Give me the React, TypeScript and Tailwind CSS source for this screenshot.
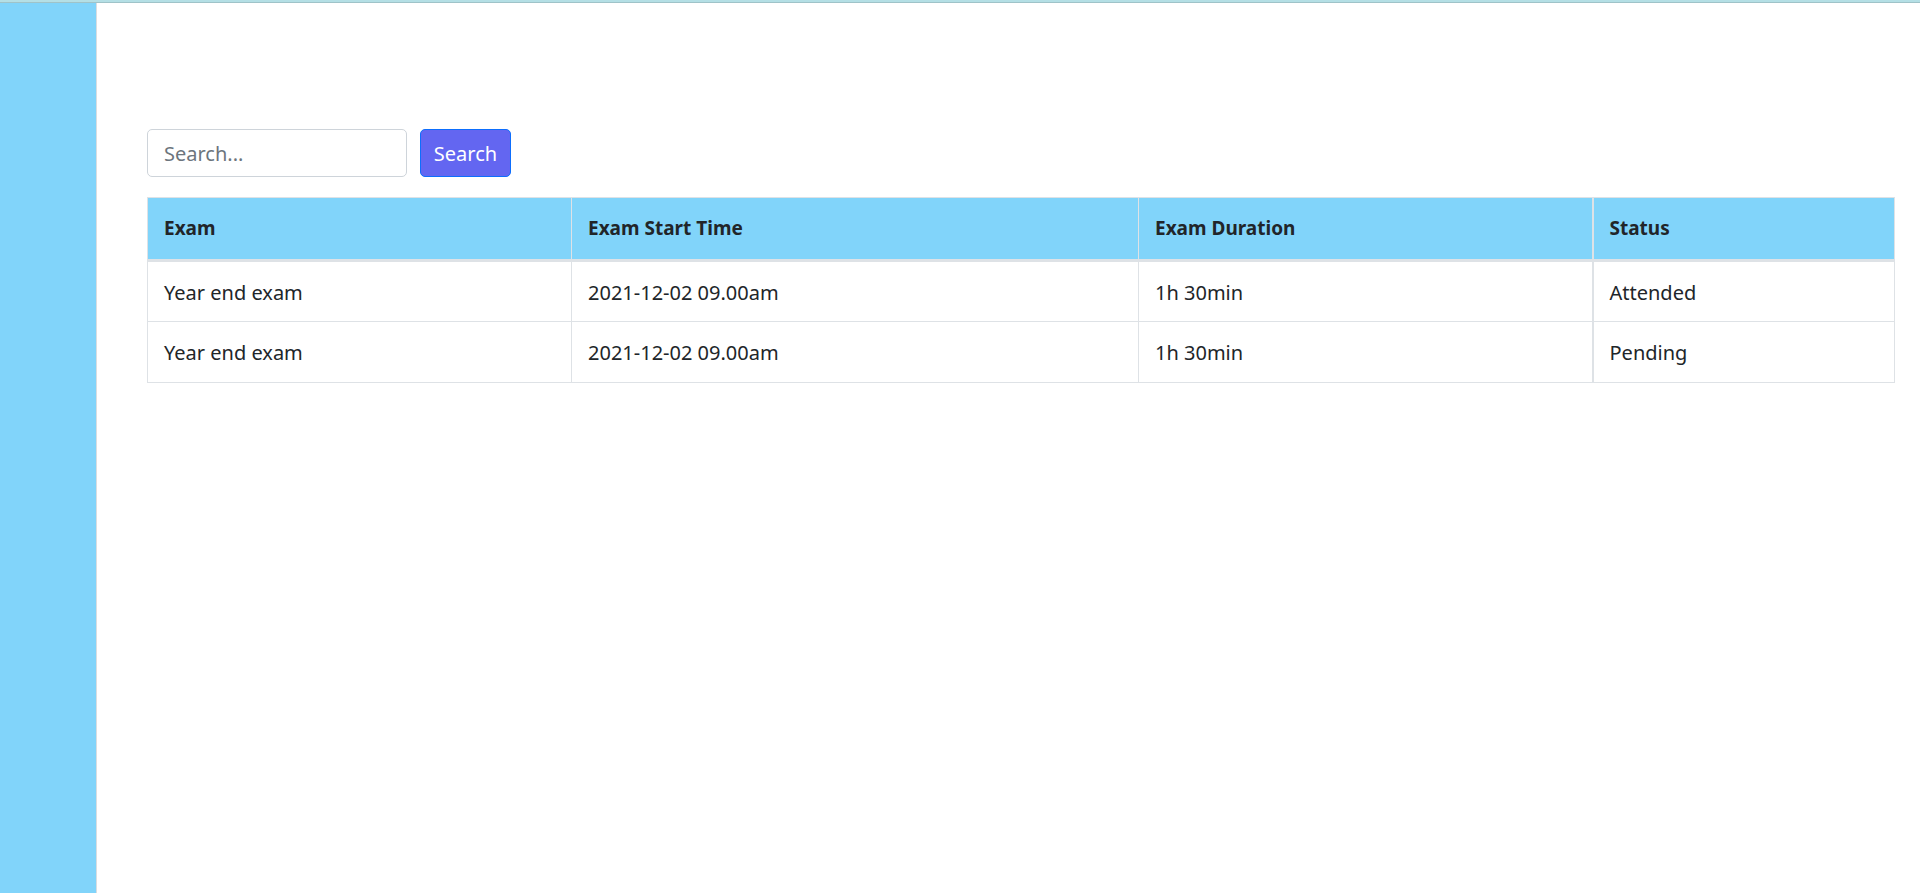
import { useState } from "react";

interface ExamRow {
  exam: string;
  start: string;
  duration: string;
  status: string;
}

const rows: ExamRow[] = [
  { exam: "Year end exam", start: "2021-12-02 09.00am", duration: "1h 30min", status: "Attended" },
  { exam: "Year end exam", start: "2021-12-02 09.00am", duration: "1h 30min", status: "Pending" },
];

export default function App() {
  const [query, setQuery] = useState("");

  return (
    <div className="h-[893px] w-full flex flex-col bg-white font-['Noto_Sans',sans-serif] text-[#212529] overflow-hidden">
      {/* top strip */}
      <div className="h-[2px] bg-[#b4dfe5]" />
      <div className="h-[1px] bg-[#9fc3c8]" />

      <div className="flex flex-1 min-h-0">
        {/* Sidebar */}
        <aside className="w-[97px] shrink-0 bg-[#81d4fa] border-r border-[#d9dde0]" />

        {/* Main */}
        <main className="flex-1 border-r border-[#d4d7da] pl-[50px] pr-[25px] pt-[126px]">
          <div className="flex items-center gap-[13px]">
            <input
              value={query}
              onChange={(e) => setQuery(e.target.value)}
              placeholder="Search..."
              className="w-[260px] h-[48px] px-[16px] pt-[1px] rounded-[5px] border border-[#ced4da] text-[20px] placeholder:text-[#6c757d] outline-none"
            />
            <button className="w-[91px] h-[48px] pt-[1px] rounded-[5px] bg-[#6366f1] border border-[#0d6efd] text-white text-[20px]">
              Search
            </button>
          </div>

          <table className="mt-[20px] w-[1747px] table-fixed border-collapse border border-[#dee2e6] text-[20px]">
            <colgroup>
              <col className="w-[424px]" />
              <col className="w-[567px]" />
              <col className="w-[454px]" />
              <col className="w-[302px]" />
            </colgroup>
            <thead>
              <tr className="bg-[#81d4fa] h-[63px]">
                <th className="text-left font-bold px-[16px] text-[19px] border border-[#dee2e6] border-b-[3px]">Exam</th>
                <th className="text-left font-bold px-[16px] text-[19px] border border-[#dee2e6] border-b-[3px]">Exam Start Time</th>
                <th className="text-left font-bold px-[16px] text-[19px] border border-[#dee2e6] border-b-[3px]">Exam Duration</th>
                <th className="text-left font-bold px-[16px] text-[19px] border border-[#dee2e6] border-b-[3px] border-l-[2px]">Status</th>
              </tr>
            </thead>
            <tbody>
              {rows.map((r, i) => (
                <tr key={i} className="h-[61px]">
                  <td className="px-[16px] pt-[2px] border border-[#dee2e6]">{r.exam}</td>
                  <td className="px-[16px] pt-[2px] border border-[#dee2e6]">{r.start}</td>
                  <td className="px-[16px] pt-[2px] border border-[#dee2e6]">{r.duration}</td>
                  <td className="px-[16px] pt-[2px] border border-[#dee2e6] border-l-[2px]">{r.status}</td>
                </tr>
              ))}
            </tbody>
          </table>
        </main>
      </div>
    </div>
  );
}
